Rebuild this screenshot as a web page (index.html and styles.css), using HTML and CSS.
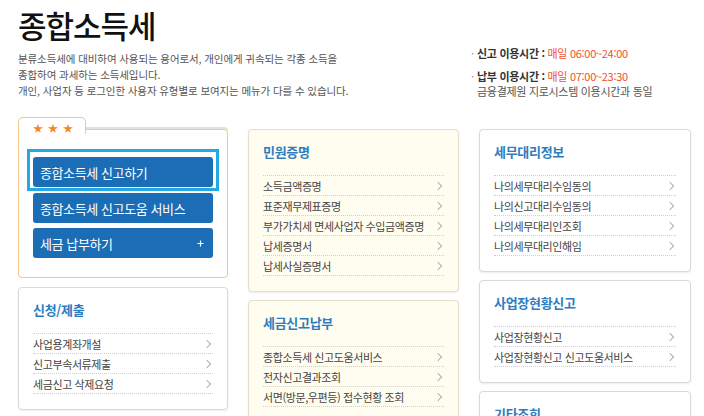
FILE: index.html
```html
<!DOCTYPE html>
<html lang="ko">
<head>
    <meta charset="UTF-8">
    <meta name="viewport" content="width=device-width, initial-scale=1.0">
    <title>종합소득세</title>
    <link rel="stylesheet" href="styles.css">
</head>
<body>
    <header class="page-head">
        <div class="intro">
            <h1>종합소득세</h1>
            <p>분류소득세에 대비하여 사용되는 용어로서, 개인에게 귀속되는 각종 소득을<br>종합하여 과세하는 소득세입니다.<br>개인, 사업자 등 로그인한 사용자 유형별로 보여지는 메뉴가 다를 수 있습니다.</p>
        </div>
        <ul class="hours">
            <li><span class="dot">·</span><b>신고 이용시간 :</b> <em>매일 06:00~24:00</em></li>
            <li class="pay"><span class="dot">·</span><b>납부 이용시간 :</b> <em>매일 07:00~23:30</em></li>
            <li class="note">금융결제원 지로시스템 이용시간과 동일</li>
        </ul>
    </header>

    <main class="columns">
        <div class="col">
            <div class="folder">
                <div class="folder-tab">
                    <span class="star">★</span><span class="star">★</span><span class="star">★</span>
                </div>
                <div class="folder-body">
                    <div class="focus-ring">
                        <a class="big-btn" href="#">종합소득세 신고하기</a>
                    </div>
                    <a class="big-btn" href="#">종합소득세 신고도움 서비스</a>
                    <a class="big-btn" href="#">세금 납부하기
                        <svg class="plus" width="7" height="7" viewBox="0 0 7 7"><path d="M3.5 0.5v6M0.5 3.5h6" stroke="#fff" stroke-width="1.2"/></svg>
                    </a>
                </div>
            </div>

            <section class="card">
                <h2>신청/제출</h2>
                <ul class="links">
                    <li><a href="#">사업용계좌개설</a></li>
                    <li><a href="#">신고부속서류제출</a></li>
                    <li><a href="#">세금신고 삭제요청</a></li>
                </ul>
            </section>
        </div>

        <div class="col shifted">
            <section class="card cream">
                <h2>민원증명</h2>
                <ul class="links">
                    <li><a href="#">소득금액증명</a></li>
                    <li><a href="#">표준재무제표증명</a></li>
                    <li><a href="#">부가가치세 면세사업자 수입금액증명</a></li>
                    <li><a href="#">납세증명서</a></li>
                    <li><a href="#">납세사실증명서</a></li>
                </ul>
            </section>

            <section class="card cream">
                <h2>세금신고납부</h2>
                <ul class="links">
                    <li><a href="#">종합소득세 신고도움서비스</a></li>
                    <li><a href="#">전자신고결과조회</a></li>
                    <li><a href="#">서면(방문,우편등) 접수현황 조회</a></li>
                </ul>
            </section>
        </div>

        <div class="col shifted">
            <section class="card">
                <h2>세무대리정보</h2>
                <ul class="links">
                    <li><a href="#">나의세무대리수임동의</a></li>
                    <li><a href="#">나의신고대리수임동의</a></li>
                    <li><a href="#">나의세무대리인조회</a></li>
                    <li><a href="#">나의세무대리인해임</a></li>
                </ul>
            </section>

            <section class="card">
                <h2>사업장현황신고</h2>
                <ul class="links">
                    <li><a href="#">사업장현황신고</a></li>
                    <li><a href="#">사업장현황신고 신고도움서비스</a></li>
                </ul>
            </section>

            <section class="card">
                <h2>기타조회</h2>
            </section>
        </div>
    </main>
</body>
</html>
```

FILE: styles.css
```css
body {
  margin: 0;
  padding: 0 13px 0 18px;
  background-color: #fff;
  font-family: "Noto Sans CJK KR", "Noto Sans", sans-serif;
  color: #333;
  overflow: hidden;
}

ul {
  list-style: none;
  margin: 0;
  padding: 0;
}

a {
  color: inherit;
  text-decoration: none;
}

.page-head {
  display: flex;
  justify-content: space-between;
  height: 117px;
}

.intro h1 {
  margin: 6px 0 0;
  font-size: 31px;
  font-weight: 500;
  line-height: 38px;
  letter-spacing: -1px;
  color: #111;
}

.intro p {
  margin: 7px 0 0;
  font-size: 10.5px;
  line-height: 16px;
  letter-spacing: -0.1px;
  color: #555;
}

.hours {
  margin: 45px 30px 0 0;
  width: 190px;
  font-size: 11px;
  line-height: 16px;
  letter-spacing: -0.3px;
  color: #444;
}

.hours li.pay {
  margin-top: 7px;
}

.hours .dot {
  display: inline-block;
  width: 6px;
  color: #888;
}

.hours b {
  font-weight: 700;
  color: #333;
}

.hours em {
  font-style: normal;
  color: #f0502d;
}

.hours li.note {
  padding-left: 6px;
  line-height: 14px;
  color: #555;
}

.columns {
  display: grid;
  grid-template-columns: 210px 211px 212px;
  gap: 20px;
  align-items: start;
}

.col {
  display: flex;
  flex-direction: column;
  gap: 9px;
}

.col.shifted {
  padding-top: 12px;
  gap: 8px;
}

/* folder box with stars */
.folder-tab {
  position: relative;
  z-index: 1;
  width: 68px;
  height: 17px;
  margin-bottom: -5px;
  padding: 5px 0 0 14px;
  box-sizing: border-box;
  border: 1px solid #f3c78e;
  border-bottom: none;
  border-radius: 5px 5px 0 0;
  background-color: #fff;
  font-size: 10px;
  line-height: 10px;
  letter-spacing: 5px;
  color: #f18a1e;
}

.folder-body {
  border: 1px solid #f3c78e;
  border-radius: 0 4px 4px 4px;
  box-shadow: 0 -2px 0 #e6e0da;
  padding: 19px 8px 19px;
  display: flex;
  flex-direction: column;
  gap: 5px;
}

.focus-ring {
  border: 3px solid #22a8e6;
  padding: 5px 3px 1px;
  margin-bottom: -3px;
}

.big-btn {
  display: flex;
  justify-content: space-between;
  align-items: center;
  height: 30px;
  padding: 0 9px 0 7px;
  border-radius: 3px;
  background-color: #1b6db5;
  color: #fff;
  font-size: 13px;
  letter-spacing: -0.4px;
}

.folder-body > .big-btn {
  margin: 0 6px;
}

.plus {
  display: block;
}

/* link cards */
.card {
  border: 1px solid #d9d9d9;
  border-radius: 4px;
  box-shadow: 0 1px 2px rgba(0, 0, 0, 0.08);
  background-color: #fff;
  padding: 14px 14px 15px;
}

.card.cream {
  background-color: #fffdf0;
  border-color: #e2dfcc;
}

.card h2 {
  margin: 0 0 15px;
  font-size: 13px;
  font-weight: 700;
  line-height: 16px;
  letter-spacing: -0.3px;
  color: #2e7cc0;
}

.links {
  border-top: 1px dotted #cfcfcf;
}

.links li {
  border-bottom: 1px dotted #cfcfcf;
}

.links a {
  display: flex;
  justify-content: space-between;
  align-items: center;
  height: 19px;
  font-size: 11px;
  letter-spacing: -0.4px;
  color: #444;
}

.links a::after {
  content: "";
  width: 5px;
  height: 5px;
  margin-right: 3px;
  border-top: 1px solid #b0b0b0;
  border-right: 1px solid #b0b0b0;
  transform: rotate(45deg);
}
```
